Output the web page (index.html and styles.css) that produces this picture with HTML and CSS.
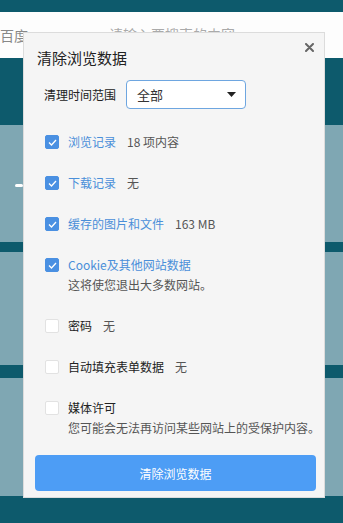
FILE: index.html
```html
<!DOCTYPE html>
<html lang="zh">
<head>
<meta charset="utf-8">
<link rel="stylesheet" href="styles.css">
</head>
<body>
<div class="page">
  <div class="band dark top"></div>
  <div class="band search">
    <span class="brand">百度</span>
    <span class="placeholder">请输入要搜索的内容</span>
  </div>
  <div class="band dark b1"></div>
  <div class="band light b2"><span class="dash"></span></div>
  <div class="band dark b3"></div>
  <div class="band light b4"></div>
  <div class="band dark b5"></div>
  <div class="band light b6"></div>
  <div class="band dark b7"></div>
</div>

<div class="modal">
  <svg class="close" width="9" height="9" viewBox="0 0 9 9"><path d="M1 1L8 8M8 1L1 8" stroke="#666" stroke-width="2" stroke-linecap="round"/></svg>
  <div class="title">清除浏览数据</div>
  <div class="range">
    <span class="range-label">清理时间范围</span>
    <div class="select"><span>全部</span><svg width="9" height="5" viewBox="0 0 9 5"><path d="M0 0H9L4.5 5Z" fill="#222"/></svg></div>
  </div>
  <div class="items">
    <div class="item checked">
      <span class="box"><svg width="9" height="7" viewBox="0 0 9 7"><path d="M1 3.5L3.5 6L8 1" stroke="#fff" stroke-width="1.3" fill="none"/></svg></span>
      <div class="text"><div class="line"><span class="name">浏览记录</span><span class="meta">18 项内容</span></div></div>
    </div>
    <div class="item checked">
      <span class="box"><svg width="9" height="7" viewBox="0 0 9 7"><path d="M1 3.5L3.5 6L8 1" stroke="#fff" stroke-width="1.3" fill="none"/></svg></span>
      <div class="text"><div class="line"><span class="name">下载记录</span><span class="meta">无</span></div></div>
    </div>
    <div class="item checked">
      <span class="box"><svg width="9" height="7" viewBox="0 0 9 7"><path d="M1 3.5L3.5 6L8 1" stroke="#fff" stroke-width="1.3" fill="none"/></svg></span>
      <div class="text"><div class="line"><span class="name">缓存的图片和文件</span><span class="meta">163 MB</span></div></div>
    </div>
    <div class="item checked">
      <span class="box"><svg width="9" height="7" viewBox="0 0 9 7"><path d="M1 3.5L3.5 6L8 1" stroke="#fff" stroke-width="1.3" fill="none"/></svg></span>
      <div class="text"><div class="line"><span class="name">Cookie及其他网站数据</span></div><div class="sub">这将使您退出大多数网站。</div></div>
    </div>
    <div class="item">
      <span class="box"></span>
      <div class="text"><div class="line"><span class="name">密码</span><span class="meta">无</span></div></div>
    </div>
    <div class="item">
      <span class="box"></span>
      <div class="text"><div class="line"><span class="name">自动填充表单数据</span><span class="meta">无</span></div></div>
    </div>
    <div class="item">
      <span class="box"></span>
      <div class="text"><div class="line"><span class="name">媒体许可</span></div><div class="sub">您可能会无法再访问某些网站上的受保护内容。</div></div>
    </div>
  </div>
  <button class="clear">清除浏览数据</button>
</div>
</body>
</html>
```

FILE: styles.css
```css
* { box-sizing: border-box; }
html, body { margin: 0; padding: 0; }
body {
  width: 343px;
  height: 523px;
  overflow: hidden;
  position: relative;
  font-family: "Noto Sans CJK SC", "Noto Sans", sans-serif;
  background: #0d5a6c;
}
.page { display: flex; flex-direction: column; height: 523px; }
.band { flex: none; }
.dark { background: #0d5a6c; }
.light { background: #7fa7b3; }
.top { height: 12px; }
.search {
  height: 46px;
  background: #fdfdfd;
  display: flex;
  align-items: center;
  font-size: 14px;
  color: #888;
  position: relative;
}
.brand { margin-left: 0; }
.placeholder { margin-left: 81px; color: #aaa; margin-top: -2px; }
.b1 { height: 67px; }
.b2 { height: 117px; position: relative; }
.dash { position: absolute; left: 15px; top: 59px; width: 8px; height: 3px; background: #fff; border-radius: 2px; }
.b3 { height: 10px; }
.b4 { height: 113px; }
.b5 { height: 13px; }
.b6 { height: 118px; }
.b7 { flex: 1; }

.modal {
  position: absolute;
  left: 23px;
  top: 32px;
  width: 302px;
  height: 466px;
  background: #f5f5f5;
  border: 1px solid #dcdcdc;
  padding: 15px 0 0 13px;
}
.close { position: absolute; right: 10px; top: 10px; }
.title { font-size: 15px; line-height: 20px; color: #222; }
.range { display: flex; align-items: center; margin-top: 12px; padding-left: 7px; }
.range-label { font-size: 12px; color: #222; width: 82px; }
.select {
  width: 120px;
  height: 29px;
  border: 1px solid #6ea6e0;
  border-radius: 4px;
  background: #fff;
  display: flex;
  align-items: center;
  justify-content: space-between;
  padding: 0 9px 0 10px;
  font-size: 13px;
  color: #333;
}
.items { display: flex; flex-direction: column; gap: 21px; margin-top: 23px; padding-left: 8px; }
.item { display: flex; align-items: flex-start; }
.box {
  width: 14px; height: 14px;
  margin-top: 3px;
  border-radius: 2px;
  background: #fff;
  border: 1px solid #e2e2e2;
  display: flex; align-items: center; justify-content: center;
  flex: none;
}
.checked .box { background: #4a90e2; border-color: #4a90e2; }
.text { margin-left: 9px; font-size: 12px; line-height: 20px; white-space: nowrap; }
.line { display: flex; gap: 11px; }
.name { color: #222; }
.checked .name { color: #4a8fd9; }
.meta { color: #555; }
.sub { color: #555; }
.clear {
  display: block;
  margin-top: 17px;
  margin-left: -2px;
  width: 281px;
  height: 36px;
  border: none;
  border-radius: 4px;
  background: #4d9df5;
  color: #fff;
  font-family: inherit;
  font-size: 12px;
}
```
